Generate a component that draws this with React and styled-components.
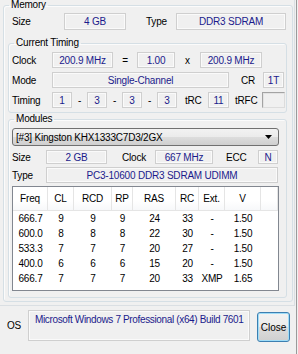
import styled, { createGlobalStyle, css } from "styled-components";

const GlobalStyle = createGlobalStyle`
  html, body {
    margin: 0;
    padding: 0;
    background: #f0f0f0;
  }
  body {
    font-family: "Liberation Sans", Arial, sans-serif;
    font-size: 10px;
    letter-spacing: -0.2px;
    color: #000;
  }
`;

const Window = styled.div`
  width: 297px;
  height: 354px;
  box-sizing: border-box;
  border-right: 1px solid #9a9a9a;
  background: #f0f0f0;
  overflow: hidden;
`;

const TabPage = styled.div`
  width: 295px;
  height: 306px;
  box-sizing: border-box;
  padding-left: 3px;
  border-right: 1px solid #dadfe3;
  border-bottom: 1px solid #dadfe3;
`;

const GroupBox = styled.fieldset`
  width: ${(p) => p.$w}px;
  margin: ${(p) => p.$mt || 0}px 0 0 ${(p) => p.$ml || 0}px;
  padding: 0 0 ${(p) => p.$pb || 0}px;
  box-sizing: border-box;
  min-width: 0;
  border: 1px solid #d5dfe5;
  border-radius: 3px;
  box-shadow: inset 1px 1px 0 #fbfbfb;
`;

const Legend = styled.legend`
  margin-left: 5px;
  padding: 0 2px;
  font-size: 10px;
  line-height: 10px;
`;

const Row = styled.div`
  display: flex;
  align-items: center;
  height: ${(p) => p.$h || 16}px;
  margin-top: ${(p) => p.$mt || 0}px;
  padding-left: ${(p) => p.$pl || 0}px;
`;

const Label = styled.span`
  flex: none;
  width: ${(p) => p.$w}px;
  box-sizing: border-box;
  padding-left: ${(p) => p.$pl || 0}px;
  padding-right: ${(p) => p.$pr || 0}px;
  text-align: ${(p) => p.$align || "left"};
  white-space: nowrap;
`;

const Value = styled.div`
  flex: none;
  width: ${(p) => p.$w}px;
  height: 100%;
  box-sizing: border-box;
  display: flex;
  align-items: center;
  justify-content: center;
  white-space: nowrap;
  color: #1b1b8c;
  border: 1px solid #cfcfcf;
  box-shadow: inset 0 0 0 1px #fafafa;
  ${(p) =>
    p.$sunken &&
    css`
      border-color: #a3a3a3 #dcdcdc #dcdcdc #a3a3a3;
      box-shadow: inset 1px 1px 0 #e3e3e3;
    `}
`;

const Combo = styled.div`
  width: 267px;
  height: 18px;
  margin: 4px 0 0 3px;
  box-sizing: border-box;
  display: flex;
  align-items: center;
  justify-content: space-between;
  padding: 0 6px 0 3px;
  border: 1px solid #707070;
  border-radius: 3px;
  background: linear-gradient(#f2f2f2 0%, #ebebeb 50%, #dddddd 50%, #cfcfcf 100%);
  white-space: nowrap;
`;

const ListView = styled.div`
  width: 267px;
  height: 105px;
  margin: 3px 0 0 3px;
  box-sizing: border-box;
  border: 1px solid #828790;
  background: #fff;
`;

const columns = "35px 26px 38px 21px 43px 23px 26px 36px 1fr";

const HeaderRow = styled.div`
  display: grid;
  grid-template-columns: ${columns};
  height: 23px;
  border-bottom: 1px solid #e5e5e5;
  background: linear-gradient(#ffffff 0%, #ffffff 60%, #f7f8fa 100%);
`;

const HeaderCell = styled.div`
  border-right: 1px solid #e5e5e5;
  text-align: center;
  line-height: 23px;
`;

const DataRow = styled.div`
  display: grid;
  grid-template-columns: ${columns};
  height: 15px;
  line-height: 15px;
`;

const DataCell = styled.div`
  text-align: center;
  white-space: nowrap;
`;

const BottomBar = styled.div`
  display: flex;
  align-items: flex-start;
  margin-top: 4px;
`;

const OsLabel = styled.span`
  width: 28px;
  height: 31px;
  box-sizing: border-box;
  padding-left: 7px;
  line-height: 31px;
`;

const OsBox = styled.div`
  width: 222px;
  height: 31px;
  box-sizing: border-box;
  padding: 3px 6px;
  color: #1b1b8c;
  letter-spacing: -0.35px;
  white-space: nowrap;
  border: 1px solid #cfcfcf;
  box-shadow: inset 0 0 0 1px #fafafa;
`;

const Button = styled.button`
  width: 33px;
  height: 30px;
  margin: 2px 0 0 7px;
  padding: 0;
  font: inherit;
  color: #000;
  border: 1px solid #3c7fb1;
  border-radius: 3px;
  box-shadow: inset 0 0 0 1px #9fdcf7;
  background: linear-gradient(#f2f2f2 0%, #ebebeb 50%, #dddddd 50%, #cfcfcf 100%);
`;

const header = ["Freq", "CL", "RCD", "RP", "RAS", "RC", "Ext.", "V", ""];
const rows = [
  ["666.7", "9", "9", "9", "24", "33", "-", "1.50"],
  ["600.0", "8", "8", "8", "22", "30", "-", "1.50"],
  ["533.3", "7", "7", "7", "20", "27", "-", "1.50"],
  ["400.0", "6", "6", "6", "15", "20", "-", "1.50"],
  ["666.7", "7", "7", "7", "20", "33", "XMP", "1.65"],
];

const App = () => {
  return (
    <>
      <GlobalStyle />
      <Window>
        <TabPage>
          <GroupBox $w={290} $pb={3}>
            <Legend>Memory</Legend>
            <Row $h={17} $mt={3} $pl={8}>
              <Label $w={52}>Size</Label>
              <Value $w={62}>4 GB</Value>
              <Label $w={50} $pl={20}>Type</Label>
              <Value $w={110}>DDR3 SDRAM</Value>
            </Row>

            <GroupBox $w={279} $mt={8} $ml={4} $pb={4}>
              <Legend>Current Timing</Legend>
              <Row $mt={4} $pl={3}>
                <Label $w={40}>Clock</Label>
                <Value $w={61}>200.9 MHz</Value>
                <Label $w={24} $align="center">=</Label>
                <Value $w={38}>1.00</Value>
                <Label $w={25} $align="center">x</Label>
                <Value $w={62}>200.9 MHz</Value>
              </Row>
              <Row $mt={4} $pl={3}>
                <Label $w={40}>Mode</Label>
                <Value $w={177}>Single-Channel</Value>
                <Label $w={34} $align="right" $pr={8}>CR</Label>
                <Value $w={21}>1T</Value>
              </Row>
              <Row $mt={4} $pl={3}>
                <Label $w={40}>Timing</Label>
                <Value $w={20}>1</Value>
                <Label $w={15} $align="center">-</Label>
                <Value $w={20}>3</Value>
                <Label $w={15} $align="center">-</Label>
                <Value $w={20}>3</Value>
                <Label $w={15} $align="center">-</Label>
                <Value $w={20}>3</Value>
                <Label $w={31} $pl={8}>tRC</Label>
                <Value $w={21}>11</Value>
                <Label $w={33} $pl={6}>tRFC</Label>
                <Value $w={23} $sunken />
              </Row>
            </GroupBox>

            <GroupBox $w={279} $mt={1} $ml={4} $pb={6}>
              <Legend>Modules</Legend>
              <Combo>
                <span>[#3] Kingston KHX1333C7D3/2GX</span>
                <svg width="7" height="4" viewBox="0 0 7 4">
                  <path d="M0 0H7L3.5 4Z" fill="#000" />
                </svg>
              </Combo>
              <Row $h={14} $mt={4} $pl={3}>
                <Label $w={34}>Size</Label>
                <Value $w={61}>2 GB</Value>
                <Label $w={48} $pl={15}>Clock</Label>
                <Value $w={58}>667 MHz</Value>
                <Label $w={45} $pl={13}>ECC</Label>
                <Value $w={20}>N</Value>
              </Row>
              <Row $mt={3} $pl={3}>
                <Label $w={34}>Type</Label>
                <Value $w={232}>PC3-10600 DDR3 SDRAM UDIMM</Value>
              </Row>
              <ListView>
                <HeaderRow>
                  {header.map((h, i) => (
                    <HeaderCell key={i}>{h}</HeaderCell>
                  ))}
                </HeaderRow>
                {rows.map((r, i) => (
                  <DataRow key={i}>
                    {r.map((c, j) => (
                      <DataCell key={j}>{c}</DataCell>
                    ))}
                  </DataRow>
                ))}
              </ListView>
            </GroupBox>
          </GroupBox>
        </TabPage>

        <BottomBar>
          <OsLabel>OS</OsLabel>
          <OsBox>Microsoft Windows 7 Professional (x64) Build 7601</OsBox>
          <Button>Close</Button>
        </BottomBar>
      </Window>
    </>
  );
};

export default App;
